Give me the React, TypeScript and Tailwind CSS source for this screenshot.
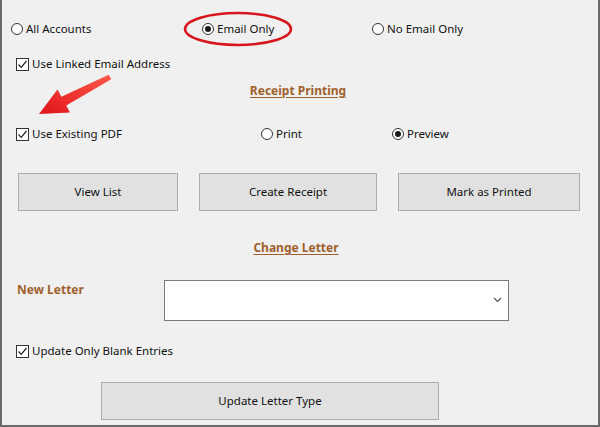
import { ReactNode } from "react";

const font = { fontFamily: '"Noto Sans", "Open Sans", sans-serif' };

function Radio({ checked, label }: { checked?: boolean; label: string }) {
  return (
    <div className="flex items-center gap-[3px]">
      <span className="w-[12px] h-[12px] rounded-full border border-[#333] bg-white flex items-center justify-center">
        {checked && <span className="w-[6px] h-[6px] rounded-full bg-[#1a1a1a]" />}
      </span>
      <span>{label}</span>
    </div>
  );
}

function Check({ label }: { label: string }) {
  return (
    <div className="flex items-center gap-[3px]">
      <span className="w-[13px] h-[13px] border border-[#333] bg-white flex items-center justify-center">
        <svg width="11" height="11" viewBox="0 0 11 11">
          <path d="M1.5 5.5 L4.2 8.3 L9.5 2" fill="none" stroke="#222" strokeWidth="1.2" />
        </svg>
      </span>
      <span>{label}</span>
    </div>
  );
}

function Btn({ children, className }: { children: ReactNode; className: string }) {
  return (
    <div className={`h-[38px] bg-[#e1e1e1] border border-[#adadad] flex items-center justify-center ${className}`}>
      {children}
    </div>
  );
}

function Heading({ children, className }: { children: ReactNode; className: string }) {
  return (
    <div className={`h-[16px] flex items-center justify-center font-bold text-[#a0602c] underline underline-offset-2 text-[12px] ${className}`}>
      {children}
    </div>
  );
}

export default function App() {
  return (
    <div
      className="relative w-[600px] h-[427px] bg-[#f0f0f0] border-l-2 border-r-2 border-b-2 border-[#6a6a6a] text-[11.5px] text-[#111] overflow-hidden"
      style={font}
    >
      {/* source filter */}
      <div className="flex items-center h-[18px] mt-[20px] pl-[9px]">
        <div className="w-[191px]"><Radio label="All Accounts" /></div>
        <div className="w-[170px]"><Radio checked label="Email Only" /></div>
        <Radio label="No Email Only" />
      </div>

      <div className="flex items-center h-[16px] mt-[18px] pl-[14px]">
        <Check label="Use Linked Email Address" />
      </div>

      <div className="mt-[11px]">
        <Heading className="pr-[4px]">Receipt Printing</Heading>
      </div>

      <div className="flex items-center h-[16px] mt-[27px] pl-[14px]">
        <div className="w-[245px]"><Check label="Use Existing PDF" /></div>
        <div className="w-[131px]"><Radio label="Print" /></div>
        <Radio checked label="Preview" />
      </div>

      <div className="flex mt-[31px] pl-[16px]">
        <Btn className="w-[160px]">View List</Btn>
        <Btn className="w-[178px] ml-[21px]">Create Receipt</Btn>
        <Btn className="w-[182px] ml-[21px]">Mark as Printed</Btn>
      </div>

      <div className="mt-[29px]">
        <Heading className="pr-[8px]">Change Letter</Heading>
      </div>

      <div className="flex mt-[24px] pl-[15px]">
        <div className="w-[147px] pt-[1px] font-bold text-[#a0602c] text-[12px]">New Letter</div>
        <div className="relative w-[345px] h-[41px] bg-white border border-[#7a7a7a]">
          <svg className="absolute right-[6px] top-[16px]" width="9" height="6" viewBox="0 0 9 6">
            <path d="M1 1 L4.5 4.5 L8 1" fill="none" stroke="#555" strokeWidth="1.2" />
          </svg>
        </div>
      </div>

      <div className="flex items-center h-[16px] mt-[22px] pl-[14px]">
        <Check label="Update Only Blank Entries" />
      </div>

      <div className="flex mt-[23px] pl-[99px]">
        <Btn className="w-[338px]">Update Letter Type</Btn>
      </div>

      {/* annotations */}
      <svg className="absolute left-0 top-0 pointer-events-none" width="600" height="427">
        <defs>
          <linearGradient id="ar" x1="0" y1="1" x2="1" y2="0">
            <stop offset="0" stopColor="#e0141a" />
            <stop offset="1" stopColor="#ff5a4a" />
          </linearGradient>
        </defs>
        <ellipse cx="236" cy="29" rx="53" ry="16" fill="none" stroke="#d8141c" strokeWidth="2.5" />
        <polygon
          points="37,114 68,112.5 64.2,105.5 109.3,79.3 106.7,74.7 59.4,96.7 55.5,89.5"
          fill="url(#ar)"
        />
      </svg>
    </div>
  );
}
